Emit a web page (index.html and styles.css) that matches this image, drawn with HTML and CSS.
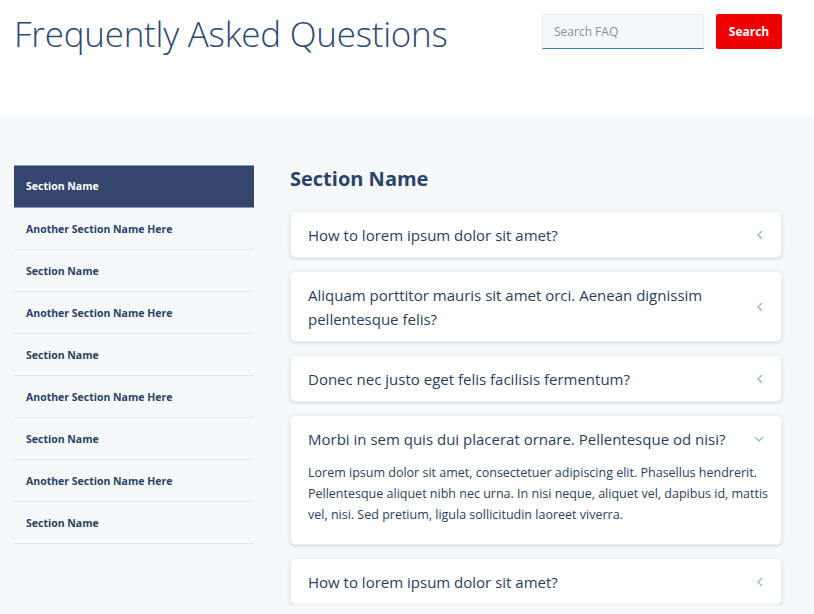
FILE: index.html
```html
<!DOCTYPE html>
<html lang="en">
<head>
<meta charset="utf-8">
<title>FAQ</title>
<link rel="stylesheet" href="styles.css">
</head>
<body>
<header class="top">
  <h1 class="title">Frequently Asked Questions</h1>
  <form class="search">
    <input class="search-input" type="text" placeholder="Search FAQ">
    <button class="search-btn" type="button">Search</button>
  </form>
</header>
<div class="content">
  <nav class="sidebar">
    <a class="nav-item active">Section Name</a>
    <a class="nav-item">Another Section Name Here</a>
    <a class="nav-item">Section Name</a>
    <a class="nav-item">Another Section Name Here</a>
    <a class="nav-item">Section Name</a>
    <a class="nav-item">Another Section Name Here</a>
    <a class="nav-item">Section Name</a>
    <a class="nav-item">Another Section Name Here</a>
    <a class="nav-item">Section Name</a>
  </nav>
  <main class="main">
    <h2 class="section-title">Section Name</h2>
    <div class="card">
      <div class="q"><span class="q-text">How to lorem ipsum dolor sit amet?</span><svg class="chev" viewBox="0 0 8 10" width="8" height="10"><path d="M6 1 L2 5 L6 9" fill="none" stroke="#8fbcd2" stroke-width="1.3"/></svg></div>
    </div>
    <div class="card">
      <div class="q"><span class="q-text">Aliquam porttitor mauris sit amet orci. Aenean dignissim pellentesque felis?</span><svg class="chev" viewBox="0 0 8 10" width="8" height="10"><path d="M6 1 L2 5 L6 9" fill="none" stroke="#8fbcd2" stroke-width="1.3"/></svg></div>
    </div>
    <div class="card">
      <div class="q"><span class="q-text">Donec nec justo eget felis facilisis fermentum?</span><svg class="chev" viewBox="0 0 8 10" width="8" height="10"><path d="M6 1 L2 5 L6 9" fill="none" stroke="#8fbcd2" stroke-width="1.3"/></svg></div>
    </div>
    <div class="card open">
      <div class="q"><span class="q-text">Morbi in sem quis dui placerat ornare. Pellentesque od nisi?</span><svg class="chev down" viewBox="0 0 10 8" width="10" height="8"><path d="M1 2 L5 6 L9 2" fill="none" stroke="#8fbcd2" stroke-width="1.3"/></svg></div>
      <p class="answer">Lorem ipsum dolor sit amet, consectetuer adipiscing elit. Phasellus hendrerit. Pellentesque aliquet nibh nec urna. In nisi neque, aliquet vel, dapibus id, mattis vel, nisi. Sed pretium, ligula sollicitudin laoreet viverra.</p>
    </div>
    <div class="card">
      <div class="q"><span class="q-text">How to lorem ipsum dolor sit amet?</span><svg class="chev" viewBox="0 0 8 10" width="8" height="10"><path d="M6 1 L2 5 L6 9" fill="none" stroke="#8fbcd2" stroke-width="1.3"/></svg></div>
    </div>
  </main>
</div>
</body>
</html>
```
FILE: styles.css
```css
* { box-sizing: border-box; }
html, body { margin: 0; padding: 0; }
body {
  font-family: "Open Sans", "Noto Sans", sans-serif;
  color: #2a4266;
  background: #f5f9fc;
}
.top {
  background: #fff;
  height: 116px;
  display: flex;
  align-items: flex-start;
  justify-content: space-between;
  padding: 14px 32px 0 14px;
}
.title {
  margin: 0;
  font-weight: 300;
  font-size: 35px;
  line-height: 40px;
  color: #2b4a73;
  letter-spacing: -0.25px;
}
.search {
  display: flex;
  gap: 12px;
  margin: 0;
}
.search-input {
  width: 162px;
  height: 35px;
  border: 1px solid #e1ecf2;
  border-bottom: 1px solid #3f80a2;
  border-radius: 2px 2px 0 0;
  background: #f3f8fb;
  padding: 0 11px;
  font-family: inherit;
  font-size: 12px;
  color: #333;
  outline: none;
}
.search-input::placeholder { color: #8a8f95; }
.search-btn {
  width: 66px;
  height: 35px;
  border: none;
  border-radius: 2px;
  background: #ee0000;
  color: #fff;
  font-family: inherit;
  font-weight: 700;
  font-size: 12px;
  padding: 0;
}
.content {
  display: flex;
  align-items: flex-start;
  padding: 49px 32px 0 14px;
  gap: 36px;
}
.sidebar {
  width: 240px;
  flex: none;
  display: flex;
  flex-direction: column;
}
.nav-item {
  display: block;
  height: 42px;
  line-height: 42px;
  padding: 0 12px;
  font-size: 10.5px;
  font-weight: 700;
  color: #2a4266;
  border-bottom: 1px solid #e2e8ee;
}
.nav-item.active {
  height: 43px;
  background: #34466b;
  color: #fff;
  border-top: 1px solid #8b97ad;
  border-bottom-color: #8b97ad;
  line-height: 41px;
}
.main {
  flex: 1;
  display: flex;
  flex-direction: column;
  gap: 13px;
}
.section-title {
  margin: 0 0 5px;
  font-size: 20px;
  line-height: 28px;
  font-weight: 700;
  color: #2a4468;
}
.card {
  background: #fff;
  border-radius: 5px;
  border: 1px solid #edf2f6;
  box-shadow: 0 1px 3px rgba(60, 90, 120, 0.22);
  padding: 11px 17px 10px 17px;
}
.q {
  display: flex;
  align-items: center;
  justify-content: space-between;
  gap: 12px;
}
.q-text {
  font-size: 15px;
  line-height: 24px;
  color: #2a3f60;
}
.chev { flex: none; }
.card.open .q { align-items: flex-start; }
.card.open .chev { margin-top: 8px; margin-right: 5px; }
.card.open { padding-bottom: 19px; padding-right: 12px; }
.answer {
  margin: 11px 0 0;
  font-size: 12.5px;
  line-height: 21px;
  color: #2a3f60;
}
```
